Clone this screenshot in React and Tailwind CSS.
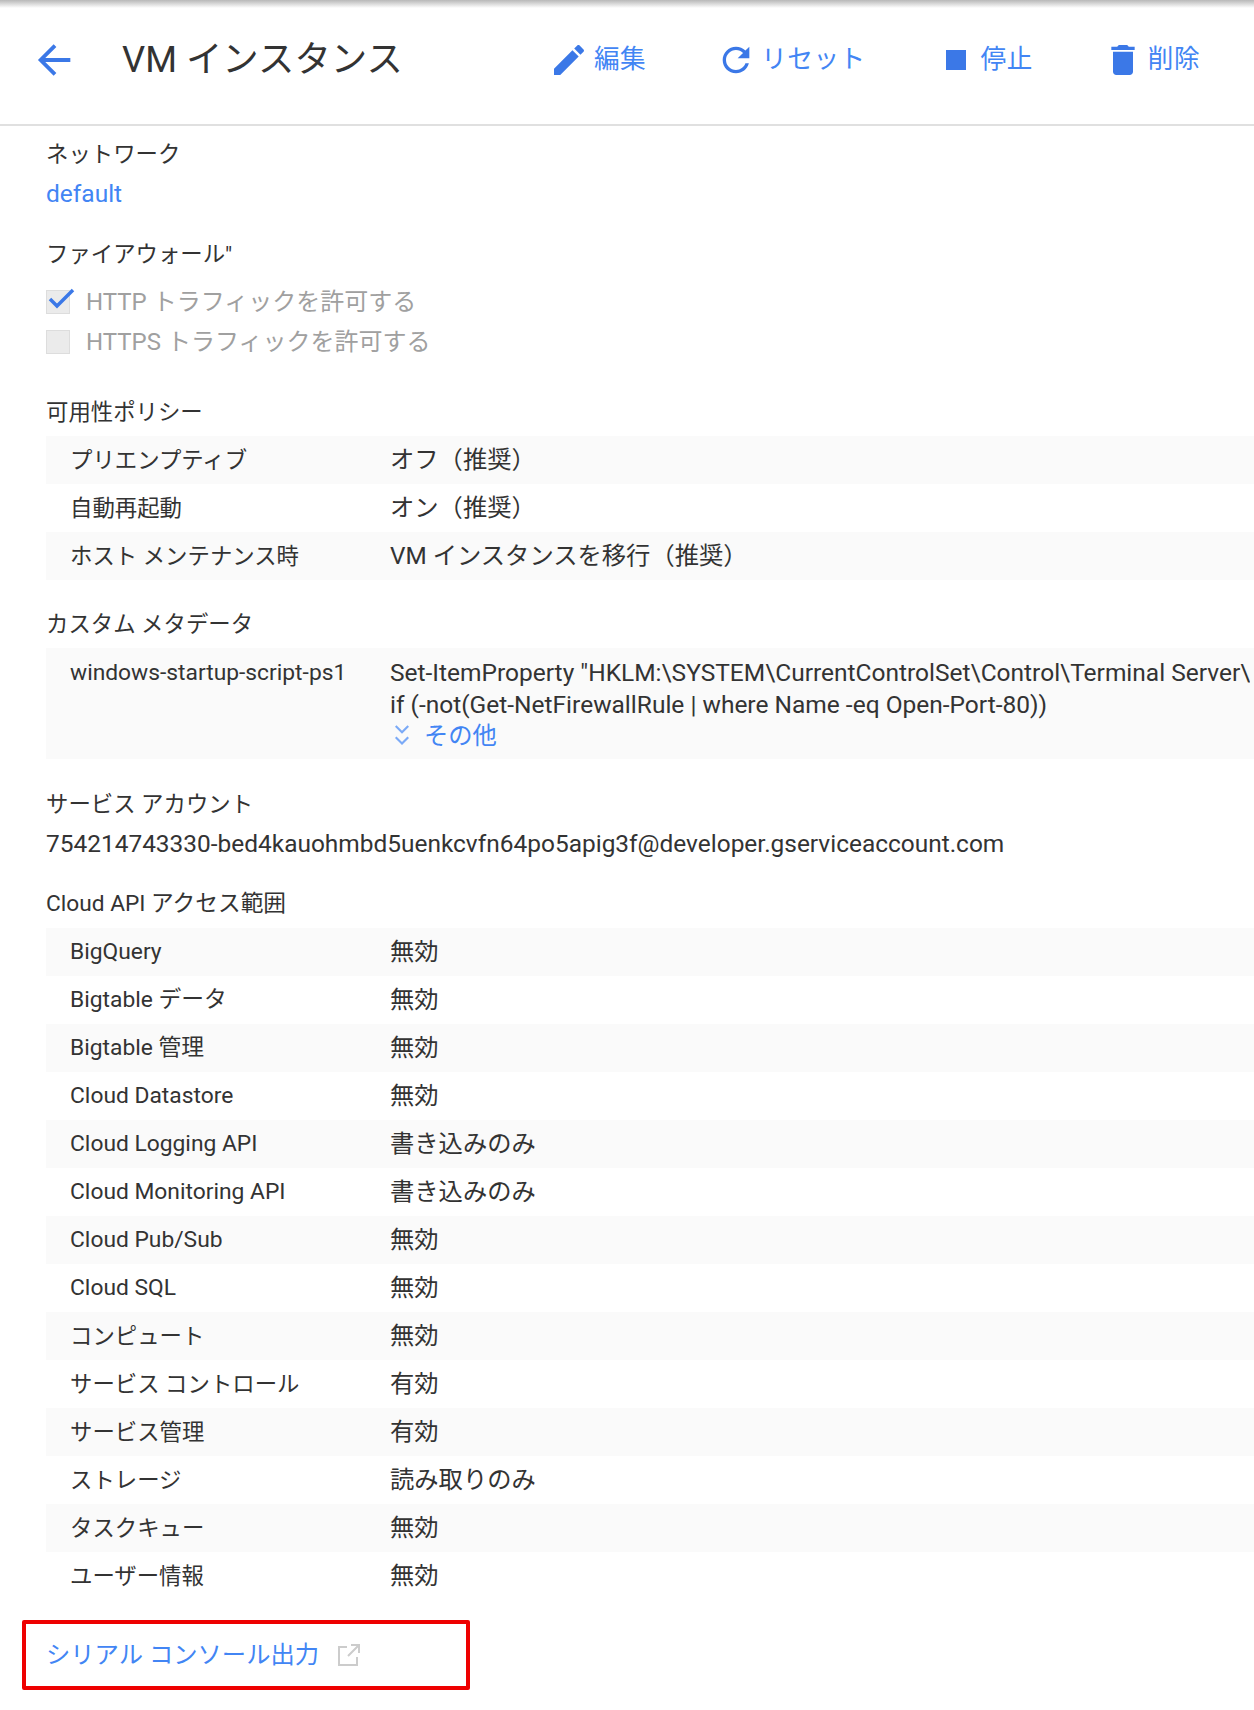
const availability = [
  ['プリエンプティブ', 'オフ（推奨）'],
  ['自動再起動', 'オン（推奨）'],
  ['ホスト メンテナンス時', 'VM インスタンスを移行（推奨）'],
]

const apiScopes = [
  ['BigQuery', '無効'],
  ['Bigtable データ', '無効'],
  ['Bigtable 管理', '無効'],
  ['Cloud Datastore', '無効'],
  ['Cloud Logging API', '書き込みのみ'],
  ['Cloud Monitoring API', '書き込みのみ'],
  ['Cloud Pub/Sub', '無効'],
  ['Cloud SQL', '無効'],
  ['コンピュート', '無効'],
  ['サービス コントロール', '有効'],
  ['サービス管理', '有効'],
  ['ストレージ', '読み取りのみ'],
  ['タスクキュー', '無効'],
  ['ユーザー情報', '無効'],
]

function Icon({ d }) {
  return (
    <svg viewBox="0 0 24 24" className="w-[40px] h-[40px] fill-[#3b78e7]">
      <path d={d} />
    </svg>
  )
}

function ActionButton({ icon, label }) {
  return (
    <div className="flex items-center gap-[5px] text-[#4285f4] text-[25.6px] tracking-[0.5px]">
      <Icon d={icon} />
      <span className="-mt-[2px]">{label}</span>
    </div>
  )
}

function Rows({ rows }) {
  return (
    <div className="ml-[46px]">
      {rows.map(([k, v], i) => (
        <div key={k} className={`flex h-[48px] items-center pl-[24px] ${i % 2 === 0 ? 'bg-[#fafafa]' : 'bg-white'}`}>
          <div className={`w-[320px] shrink-0 ${/^[A-Za-z]/.test(k) ? 'text-[22.8px]' : 'text-[22.4px]'}`}>{k}</div>
          <div className="text-[24.3px]">{v}</div>
        </div>
      ))}
    </div>
  )
}

export default function App() {
  return (
    <div className="w-[1254px] h-[1710px] overflow-hidden bg-white text-[#333333] text-[22.4px] leading-[32px] font-['Roboto','Noto_Sans_CJK_JP',sans-serif]">
      {/* ヘッダー */}
      <div className="h-[126px] border-b-2 border-[#e0e0e0] bg-gradient-to-b from-[#b8b8b8] via-white via-[8px] to-white flex items-center pl-[32px] pr-[54px] pb-[4px]">
        <svg viewBox="0 0 24 24" className="w-[46px] h-[46px] shrink-0 fill-none stroke-[#3b78e7] stroke-[2] ">
          <path d="M12 4.500 4.500 12l7.500 7.500M4.500 12H20" />
        </svg>
        <h1 className="ml-[44px] text-[36.4px] leading-none font-normal text-[#333333]">VM インスタンス</h1>
        <div className="ml-auto flex items-center gap-[70px]">
          <ActionButton label="編集" icon="M3 17.25V21h3.75L17.81 9.94l-3.75-3.75L3 17.25zM20.71 7.04c.39-.39.39-1.02 0-1.41l-2.34-2.34c-.39-.39-1.02-.39-1.41 0l-1.83 1.83 3.75 3.75 1.83-1.83z" />
          <ActionButton label="リセット" icon="M17.65 6.35C16.2 4.9 14.21 4 12 4c-4.42 0-7.99 3.58-7.99 8s3.57 8 7.99 8c3.73 0 6.84-2.55 7.73-6h-2.08c-.82 2.33-3.04 4-5.65 4-3.31 0-6-2.69-6-6s2.69-6 6-6c1.66 0 3.14.69 4.22 1.78L13 11h7V4l-2.35 2.35z" />
          <ActionButton label="停止" icon="M6 6h12v12H6z" />
          <ActionButton label="削除" icon="M6 19c0 1.1.9 2 2 2h8c1.1 0 2-.9 2-2V7H6v12zM19 4h-3.5l-1-1h-5l-1 1H5v2h14V4z" />
        </div>
      </div>

      <div className="pl-[46px] pt-[12px]">
        <div>ネットワーク</div>
        <div className="mt-[8px] text-[#4285f4] text-[24.5px]">default</div>
      </div>

      <div className="pl-[46px] mt-[28px]">
        <div>ファイアウォール"</div>
        <div className="mt-[12px] flex items-center h-[40px] text-[#a0a0a0] text-[24px]">
          <div className="relative w-[24px] h-[24px] bg-[#ebebeb] border border-[#dddddd] mr-[16px] shrink-0">
            <svg viewBox="0 0 30 30" className="absolute -top-[4px] -left-[1px] w-[30px] h-[30px] fill-none stroke-[#3b78e7] stroke-[3.5]">
              <path d="M4 12l7 7L27 3" />
            </svg>
          </div>
          HTTP トラフィックを許可する
        </div>
        <div className="flex items-center h-[40px] text-[#a0a0a0] text-[24px]">
          <div className="w-[24px] h-[24px] bg-[#ebebeb] border border-[#dddddd] mr-[16px] shrink-0" />
          HTTPS トラフィックを許可する
        </div>
      </div>

      <div className="pl-[46px] mt-[34px] mb-[8px]">可用性ポリシー</div>
      <Rows rows={availability} />

      <div className="pl-[46px] mt-[28px] mb-[8px]">カスタム メタデータ</div>
      <div className="ml-[46px] bg-[#fafafa] flex pl-[24px] pt-[9px] h-[111px]">
        <div className="w-[320px] shrink-0 text-[22.8px]">windows-startup-script-ps1</div>
        <div className="min-w-0 overflow-hidden whitespace-nowrap text-[24.5px] leading-[31.5px]">
          <div>{'Set-ItemProperty "HKLM:\\SYSTEM\\CurrentControlSet\\Control\\Terminal Server\\'}</div>
          <div>if (-not(Get-NetFirewallRule | where Name -eq Open-Port-80))</div>
          <div className="flex items-center text-[#4285f4] text-[24.3px]">
            <svg viewBox="0 0 24 24" className="w-[30px] h-[30px] -ml-[3px] mr-[7px] fill-none stroke-[#7baaf7] stroke-[1.7]">
              <path d="M7 4l5 5 5-5M7 13l5 5 5-5" />
            </svg>
            その他
          </div>
        </div>
      </div>

      <div className="pl-[46px] mt-[29px]">サービス アカウント</div>
      <div className="pl-[46px] mt-[8px] text-[24.45px]">754214743330-bed4kauohmbd5uenkcvfn64po5apig3f@developer.gserviceaccount.com</div>

      <div className="pl-[46px] mt-[28px] mb-[8px] text-[22.7px]">Cloud API アクセス範囲</div>
      <Rows rows={apiScopes} />

      <div className="ml-[22px] mt-[20px] w-[448px] h-[70px] border-[4px] border-[#ee0000] rounded-[2px] flex items-center pl-[20px] text-[#4285f4] text-[24.3px]">
        シリアル コンソール出力
        <svg viewBox="0 0 24 24" className="ml-[18px] w-[24px] h-[24px] fill-none stroke-[#cccccc] stroke-[2]">
          <path d="M10 4H2v18h18v-8M11 13 22 2M14 2h8v8" />
        </svg>
      </div>
    </div>
  )
}
